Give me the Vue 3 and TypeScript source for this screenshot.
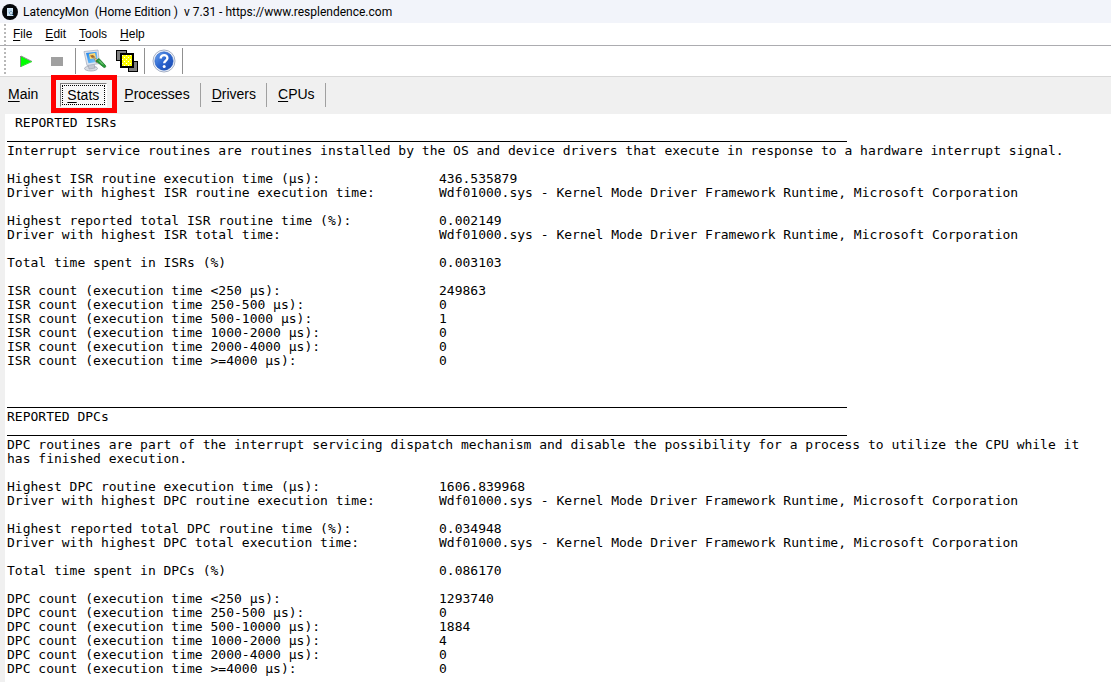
<script setup lang="ts">
interface Row {
  label: string
  value: string
}
interface Report {
  id: string
  title: string
  indent: boolean
  intro: string
  groups: Row[][]
}

const driver = 'Wdf01000.sys - Kernel Mode Driver Framework Runtime, Microsoft Corporation'

const menus: string[] = ['File', 'Edit', 'Tools', 'Help']
const tabs: string[] = ['Main', 'Stats', 'Processes', 'Drivers', 'CPUs']
const activeTab = 'Stats'

const reports: Report[] = [
  {
    id: 'isr',
    title: 'REPORTED ISRs',
    indent: true,
    intro:
      'Interrupt service routines are routines installed by the OS and device drivers that execute in response to a hardware interrupt signal.',
    groups: [
      [
        { label: 'Highest ISR routine execution time (µs):', value: '436.535879' },
        { label: 'Driver with highest ISR routine execution time:', value: driver },
      ],
      [
        { label: 'Highest reported total ISR routine time (%):', value: '0.002149' },
        { label: 'Driver with highest ISR total time:', value: driver },
      ],
      [{ label: 'Total time spent in ISRs (%)', value: '0.003103' }],
      [
        { label: 'ISR count (execution time <250 µs):', value: '249863' },
        { label: 'ISR count (execution time 250-500 µs):', value: '0' },
        { label: 'ISR count (execution time 500-1000 µs):', value: '1' },
        { label: 'ISR count (execution time 1000-2000 µs):', value: '0' },
        { label: 'ISR count (execution time 2000-4000 µs):', value: '0' },
        { label: 'ISR count (execution time >=4000 µs):', value: '0' },
      ],
    ],
  },
  {
    id: 'dpc',
    title: 'REPORTED DPCs',
    indent: false,
    intro:
      'DPC routines are part of the interrupt servicing dispatch mechanism and disable the possibility for a process to utilize the CPU while it has finished execution.',
    groups: [
      [
        { label: 'Highest DPC routine execution time (µs):', value: '1606.839968' },
        { label: 'Driver with highest DPC routine execution time:', value: driver },
      ],
      [
        { label: 'Highest reported total DPC routine time (%):', value: '0.034948' },
        { label: 'Driver with highest DPC total execution time:', value: driver },
      ],
      [{ label: 'Total time spent in DPCs (%)', value: '0.086170' }],
      [
        { label: 'DPC count (execution time <250 µs):', value: '1293740' },
        { label: 'DPC count (execution time 250-500 µs):', value: '0' },
        { label: 'DPC count (execution time 500-10000 µs):', value: '1884' },
        { label: 'DPC count (execution time 1000-2000 µs):', value: '4' },
        { label: 'DPC count (execution time 2000-4000 µs):', value: '0' },
        { label: 'DPC count (execution time >=4000 µs):', value: '0' },
      ],
    ],
  },
]
</script>

<template>
  <div class="window">
    <header class="titlebar">
      <svg class="app-icon" width="16" height="16" viewBox="0 0 16 16" aria-hidden="true">
        <circle cx="8" cy="8" r="8" fill="#05070a" />
        <rect x="5" y="4" width="6" height="8" fill="#d5e9f7" />
        <path d="M6 6h4M6 8h2" stroke="#a5c8e2" />
        <circle cx="9" cy="9" r="1.500" fill="#f4faff" stroke="#5484a8" stroke-width=".8" />
        <path d="M10 10l2 2" stroke="#33536b" />
      </svg>
      <h1>LatencyMon&nbsp; (Home Edition )&nbsp; v 7.31 - https://www.resplendence.com</h1>
    </header>

    <div class="bars">
      <nav class="menubar" aria-label="Menu">
        <button v-for="menu in menus" :key="menu" type="button">
          <u>{{ menu.charAt(0) }}</u>{{ menu.slice(1) }}
        </button>
      </nav>

      <div class="toolbar" role="toolbar" aria-label="Tools">
        <div class="group run">
          <button type="button" aria-label="Start">
            <svg width="13" height="13" viewBox="0 0 13 13">
              <path d="M1 1L11.500 6.500L1 11.500Z" fill="#00ff00" />
              <path d="M.5 1v11M1 1L12 6.500" stroke="#8a8a8a" fill="none" />
              <path d="M1 11.500L12 6.500" stroke="#33dd33" fill="none" />
            </svg>
          </button>
          <button type="button" aria-label="Stop">
            <svg width="12" height="9" viewBox="0 0 12 9"><rect width="12" height="9" fill="#a0a0a0" /></svg>
          </button>
        </div>
        <div class="group tools">
          <button type="button" aria-label="Options">
            <svg width="24" height="24" viewBox="0 0 24 24">
              <defs>
                <linearGradient id="screen" x1="0" y1="0" x2="1" y2="1">
                  <stop offset="0" stop-color="#1c7fe8" />
                  <stop offset="1" stop-color="#8bd4fb" />
                </linearGradient>
              </defs>
              <ellipse cx="8" cy="19.500" rx="6.500" ry="2.500" fill="#d9dce3" stroke="#9aa0ae" stroke-width=".7" />
              <path d="M5 15l6-1 1 5-6 1z" fill="#c5c9d4" stroke="#9096a5" stroke-width=".5" />
              <path d="M1 2.500L15 1l1.500 13.500-12.500 2z" fill="#dfe4ee" stroke="#a0a9ba" stroke-width=".7" />
              <path d="M3 4l10.500-1.200 1.500 10L5.500 14.200z" fill="url(#screen)" />
              <path d="M6 5l6-1 1 5-6 1z" fill="#fbd870" />
              <path d="M7 6.500l3-.5 2 2-3 1z" fill="#a5682b" />
              <path d="M10 7.500l5 3.500-1.500 3z" fill="#e3c38b" stroke="#80684a" stroke-width=".5" />
              <path d="M13 12l3-2.500 6.500 7c.8 1.200-.6 2.700-1.800 1.800z" fill="#259b36" stroke="#137020" stroke-width=".7" />
              <path d="M16 11.500l4 4" stroke="#9be098" />
            </svg>
          </button>
          <button type="button" aria-label="Windows">
            <svg width="23" height="23" viewBox="0 0 23 23" shape-rendering="crispEdges">
              <defs>
                <pattern id="dither" x="6" y="5" width="4" height="4" patternUnits="userSpaceOnUse">
                  <rect width="4" height="4" fill="#ffff00" />
                  <rect width="1" height="1" fill="#fff" />
                  <rect x="2" y="2" width="1" height="1" fill="#fff" />
                </pattern>
              </defs>
              <rect width="11" height="11" fill="#000" />
              <rect x="1" y="1" width="9" height="9" fill="#808080" />
              <rect x="12" y="11" width="10" height="11" fill="#000" />
              <rect x="13" y="12" width="8" height="9" fill="#808080" />
              <rect x="4" y="3" width="14" height="15" fill="#000" />
              <rect x="6" y="5" width="10" height="11" fill="url(#dither)" />
            </svg>
          </button>
        </div>
        <div class="group help">
          <button type="button" aria-label="Help">
            <svg width="24" height="24" viewBox="0 0 24 24">
              <defs>
                <linearGradient id="ball" x1="0" y1="0" x2="1" y2="1">
                  <stop offset="0" stop-color="#6ba4f0" />
                  <stop offset=".5" stop-color="#2b65cf" />
                  <stop offset="1" stop-color="#1947ae" />
                </linearGradient>
              </defs>
              <circle cx="12" cy="12" r="11" fill="#f7f9fd" stroke="#a4afc5" />
              <circle cx="12" cy="12" r="9.200" fill="url(#ball)" stroke="#245cbd" stroke-width=".6" />
              <path d="M8.700 9.500C8.700 4.800 15.600 5.200 15.400 9.300C15.300 11.500 12.200 11.800 12.200 14.300" fill="none" stroke="#fff" stroke-width="2.400" />
              <circle cx="12.200" cy="17.600" r="1.500" fill="#fff" />
            </svg>
          </button>
        </div>
      </div>
    </div>

    <nav class="tabs" aria-label="Views">
      <div v-for="tab in tabs" :key="tab" class="tab" :class="{ active: tab === activeTab }">
        <button type="button" :aria-pressed="tab === activeTab">
          <u>{{ tab.charAt(0) }}</u>{{ tab.slice(1) }}
        </button>
        <span v-if="tab === activeTab" class="highlight"></span>
      </div>
    </nav>

    <main class="report">
      <section v-for="report in reports" :key="report.id" :class="report.id">
        <h2 :class="{ indent: report.indent }">{{ report.title }}</h2>
        <div class="rule"></div>
        <p>{{ report.intro }}</p>
        <table>
          <tbody v-for="(group, i) in report.groups" :key="i">
            <tr v-for="row in group" :key="row.label">
              <th scope="row">{{ row.label }}</th>
              <td>{{ row.value }}</td>
            </tr>
          </tbody>
        </table>
      </section>
    </main>
  </div>
</template>

<style>
body {
  margin: 0;
  background: #fff;
}
</style>

<style scoped>
.window {
  display: flex;
  flex-direction: column;
  min-height: 100vh;
  color: #000;
  background: #f0f0f0;
  font-family: "Liberation Sans", Arial, sans-serif;
}
button {
  margin: 0;
  padding: 0;
  border: 0;
  background: none;
  color: inherit;
  font: inherit;
}
svg {
  display: block;
}
u {
  text-underline-offset: 2px;
}
.titlebar {
  display: flex;
  align-items: center;
  gap: 5px;
  height: 23px;
  padding-left: 2px;
  background: #f2f4fa;
}
h1 {
  margin: 0;
  font: 400 12px/20px Roboto, "Segoe UI", sans-serif;
  white-space: nowrap;
}
.bars {
  background: linear-gradient(#b8b8b8 2px, transparent 2px) 4px 1px / 2px 4px repeat-y #fff;
}
.menubar {
  display: flex;
  align-items: center;
  gap: 13px;
  height: 22px;
  padding-left: 13px;
  border-bottom: 1px solid #acacb0;
  font-size: 12px;
}
.toolbar {
  display: flex;
  align-items: center;
  height: 30px;
  border-bottom: 1px solid #d8d8d8;
}
.group {
  display: flex;
  align-items: center;
  height: 26px;
  border-right: 1px solid #909090;
}
.run {
  gap: 18px;
  padding: 0 12px 0 20px;
}
.tools {
  gap: 9px;
  padding: 0 5px 0 7px;
}
.help {
  padding: 0 6px 0 7px;
}
.tabs {
  display: flex;
  padding: 6px 0 7px;
  font-size: 14px;
}
.tab {
  position: relative;
  display: flex;
  align-items: center;
  height: 24px;
  padding: 0 10px 0 11px;
  border-right: 1px solid #a0a0a0;
}
.tab button {
  padding-bottom: 3px;
}
.tab:first-child {
  padding: 0 14px 0 8px;
}
.tab.active {
  padding: 0 5px 0 7px;
}
.tab.active button {
  height: 24px;
  padding: 0 7px 0 6px;
  border: 1px solid;
  border-color: #808080 #fff #fff #808080;
  outline: 1px dotted #000;
  outline-offset: -3px;
  background: #f8f8f8;
}
.highlight {
  position: absolute;
  inset: -8px -5px -6px -2px;
  border: 5px solid #f00;
  pointer-events: none;
}
.report {
  flex: 1;
  margin-left: 5px;
  padding: 2px 2px 6px;
  background: #fff;
  font: 13px/14px "DejaVu Sans Mono", "Lucida Console", monospace;
}
.dpc {
  margin-top: 28px;
}
.dpc::before,
.rule {
  content: "";
  display: block;
  box-sizing: border-box;
  width: 840px;
  max-width: 100%;
  height: 12px;
  margin-bottom: 2px;
  border-bottom: 1px solid #000;
}
h2,
p {
  margin: 0;
  font: inherit;
}
.indent {
  padding-left: 8px;
}
table {
  border-collapse: collapse;
}
tbody::before {
  content: "";
  display: table-row;
  height: 14px;
}
th,
td {
  height: 14px;
  padding: 0;
  font: inherit;
  text-align: left;
  white-space: nowrap;
}
th {
  width: 432px;
}
</style>
